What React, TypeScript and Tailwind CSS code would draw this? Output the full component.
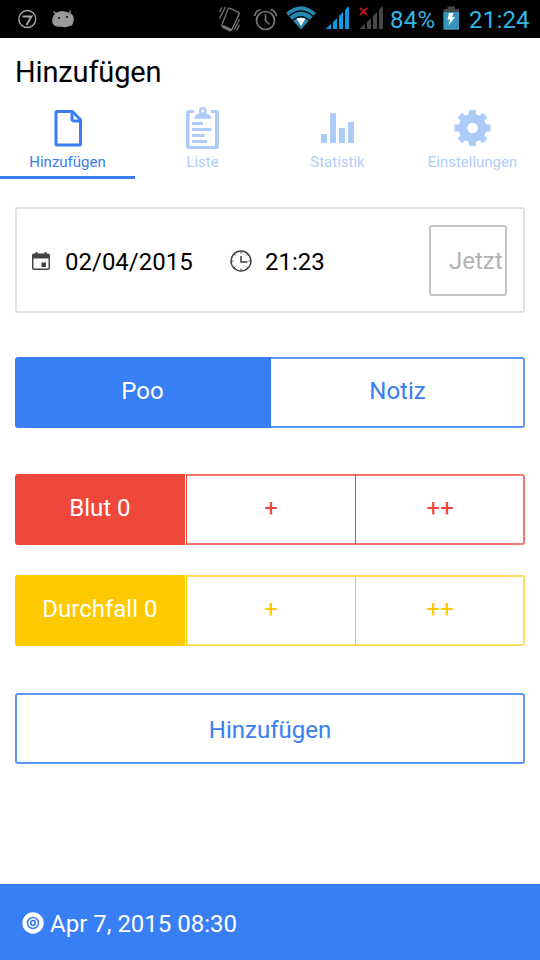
import React from 'react';
import clsx from 'clsx';

interface TabItem {
  id: string;
  label: string;
  icon: React.ReactNode;
}

const TABS: TabItem[] = [
  {
    id: 'add',
    label: 'Hinzufügen',
    icon: (
      <svg width="48" height="48" viewBox="0 0 48 48" fill="none" stroke="currentColor" strokeWidth="3">
        <path d="M13 7.500h15.500l8 8.200v24.300a1 1 0 0 1-1 1H13a1 1 0 0 1-1-1v-31.500a1 1 0 0 1 1-1z" strokeLinejoin="round" />
        <path d="M28 7.500v7.800a1.700 1.700 0 0 0 1.700 1.700h6.800" />
      </svg>
    ),
  },
  {
    id: 'list',
    label: 'Liste',
    icon: (
      <svg width="48" height="48" viewBox="1 0 48 48" fill="currentColor">
        <path d="M16 6h-4.500q-3.500 0-3.500 3v33q0 3 3 3h27q3 0 3-3v-33q0-3-3.500-3h-4.500v3h4v33h-25.500v-33h4.500z" />
        <path fillRule="evenodd" d="M16 14.700q1-4.400 5-5v-2.700a3.800 4 0 0 1 7.600 0v2.700q4 .6 5 5zM24.800 5.300a1.600 1.600 0 1 0 0 3.200a1.600 1.600 0 1 0 0-3.200z" />
        <path d="M14 18h11v3H14zM14 24h19.500v3H14zM14 30h12.500v3H14zM14 36h15v3H14z" />
      </svg>
    ),
  },
  {
    id: 'stats',
    label: 'Statistik',
    icon: (
      <svg width="48" height="48" viewBox="1 0 48 48" fill="currentColor">
        <path d="M8 30h6v9H8zM17 9h6v30h-6zM26 24h6v15h-6zM35 18h6v21h-6z" />
      </svg>
    ),
  },
  {
    id: 'settings',
    label: 'Einstellungen',
    icon: (
      <svg width="48" height="48" viewBox="0 0 48 48" fill="currentColor">
        <path
          fillRule="evenodd"
          d="M21 6h7v4.200l3.600 1.500 3-3 4.900 4.900-3 3 1.500 3.900h4.500v7h-4.500l-1.500 3.900 3 3-4.900 4.900-3-3-3.600 1.500V42h-7v-4.200l-3.600-1.500-3 3-4.900-4.900 3-3-1.500-3.900H6.500v-7H11l1.500-3.900-3-3 4.900-4.900 3 3 3.600-1.500zM24.500 18.700a5.300 5.300 0 1 0 0 10.600a5.300 5.300 0 1 0 0-10.600z"
        />
      </svg>
    ),
  },
];

const StatusBar = () => (
  <div className="flex h-[38px] items-center bg-black text-[#33b5e5]">
    <svg width="100" height="38" viewBox="0 0 100 38">
      <circle cx="27.300" cy="19" r="8.500" fill="none" stroke="#aaa" strokeWidth="1.300" />
      <path d="M22.500 16.500h9l-5 8.500" fill="none" stroke="#aaa" strokeWidth="1.800" />
      <path d="M57 13q5-2.500 11 0q5 1 5.200 6q0 7-5.200 7q-3 1.500-5.500 0q-8.500 1-9.700-4q-.5-6 4.200-9zM53.500 11.500l3.500 3M70.500 10.500l-1.500 4" fill="#9a9a9a" stroke="#9a9a9a" strokeWidth="1.200" />
      <circle cx="59" cy="18" r="1.100" fill="#111" />
      <circle cx="67" cy="17" r="1.100" fill="#111" />
    </svg>
    <svg className="ml-auto" width="180" height="38" viewBox="210 0 180 38">
      <g fill="none" stroke="#777" strokeWidth="1.300">
        <path d="M229.500 8.200l9.200 4.200q1 .5.600 1.500l-7.600 16q-.5 1-1.500.6l-7.800-3.800q-1-.5-.6-1.500l6.300-16.400q.4-1 1.400-.6z" />
        <path d="M222.800 26.300l8.200 4" strokeWidth="3" />
        <path d="M225.500 7l-6 11.500M222 7.500l-2.500 4.500M239.500 19.500l-5.500 10.500M239.500 25l-3 5.500" />
        <circle cx="265.500" cy="20.500" r="9" strokeWidth="1.700" />
        <path d="M265.500 14.500v6l4 4M254.500 16q1-5 6-6.500M276.500 16q-1-5-6-6.500" strokeWidth="1.700" />
      </g>
      <path d="M286 13q15-13.500 30 0l-15 16.500z" fill="#2789ae" />
      <path d="M288.500 16.500q12.500-11 25 0M292.500 20.500q8.500-7.500 17 0" fill="none" stroke="#001018" strokeWidth="1.400" />
      <path d="M296.500 18.500q4.500-1.500 9 0l-4.500 7.500z" fill="#fff" />
      <path d="M325.500 29l5.500-5v5zM333 22l4-3.800V29h-4zM339 16l4-4V29h-4zM345 10l4-4V29h-4z" fill="#0a9be5" />
      <path d="M359.500 29l5.500-5v5zM367 22l4-3.800V29h-4zM373 16l4-4V29h-4zM379 10l4-4V29h-4z" fill="#484848" />
      <path d="M360 8l7 7M367 8l-7 7" stroke="#b31212" strokeWidth="2" />
    </svg>
    <span className="w-[53px] pt-[2px] text-[24px] leading-[36px] tracking-[0.3px]">84%</span>
    <svg width="26" height="38" viewBox="443 0 26 38">
      <path d="M443.500 9h4V6.500h7.500V9h4v21h-15.500z" fill="#454545" />
      <path d="M443.500 12H459v17.500h-15.500z" fill="#3695bd" />
      <path d="M449 13h4.500l-1.500 4h3l-6.500 8.500 1.500-6h-2.500z" fill="#fff" />
    </svg>
    <span className="w-[71px] pt-[2px] text-[24px] leading-[36px] tracking-[0.2px]">21:24</span>
  </div>
);

interface SegmentProps {
  options: string[];
  tone: 'blue' | 'red' | 'yellow';
}

const TONES = {
  blue: { border: 'border-[#5c96f8]', fill: 'bg-[#387ef5]', text: 'text-[#387ef5]' },
  red: { border: 'border-[#f4766d]', fill: 'bg-[#ef473a]', text: 'text-[#ef473a]' },
  yellow: { border: 'border-[#fbdc5c]', fill: 'bg-[#ffc900]', text: 'text-[#ffc900]' },
};

const Segment: React.FC<SegmentProps> = ({ options, tone }) => {
  const t = TONES[tone];
  return (
    <div className="flex h-[71px] text-[24px]">
      {options.map((option, i) => {
        const last = i === options.length - 1;
        if (i === 0) {
          return (
            <button
              key={option}
              className={clsx('flex-1 rounded-l-[3px] pb-[3px] text-white', tone !== 'blue' && 'mr-px', t.fill)}
            >
              {option}
            </button>
          );
        }
        return (
          <div key={option} className="flex flex-1">
            <div className={clsx('w-px', t.fill)} />
            <button
              className={clsx('flex-1 border-y-2 pb-[3px]', last && 'rounded-r-[3px] border-r-2 pl-px', t.border, t.text)}
            >
              {option}
            </button>
          </div>
        );
      })}
    </div>
  );
};

export default function App() {
  const active = 'add';

  return (
    <div className="flex h-[960px] w-[540px] flex-col overflow-hidden bg-white font-[Roboto,sans-serif] text-black">
      <StatusBar />

      <h1 className="h-[66px] pl-[15px] pt-[14px] text-[29px] leading-[40px] tracking-[-0.15px]">Hinzufügen</h1>

      {/* Tabs */}
      <nav className="grid h-[75px] grid-cols-4 text-[#387ef5]">
        {TABS.map((tab) => (
          <div
            key={tab.id}
            className={clsx('flex flex-col items-center border-b-[3px]', tab.id === active ? 'border-[#387ef5]' : 'border-transparent')}
          >
            <div className={clsx('flex flex-col items-center', tab.id !== active && 'opacity-40')}>
              {tab.icon}
              <span className="text-[15px] leading-5">{tab.label}</span>
            </div>
          </div>
        ))}
      </nav>

      <main className="flex flex-col px-[15px] pt-[28px]">
        {/* Date and time */}
        <section className="flex h-[106px] items-center rounded-[3px] border-2 border-[#e2e2e2] pl-[14px] pr-4 text-[24px]">
          <svg className="mt-0.5" width="20" height="20" viewBox="0 0 20 20" fill="#444">
            <path fillRule="evenodd" d="M3 2.500h1.500V1h2v1.500h7V1h2v1.500H17q2 0 2 2V17q0 2-2 2H3q-2 0-2-2V4.500q0-2 2-2zM2.500 7.500v10h15v-10z" />
            <path d="M10.500 11.500h4.500v4.500h-4.500z" />
          </svg>
          <span className="ml-[14px] w-[165px] pt-[3px]">02/04/2015</span>
          <svg className="mt-px" width="22" height="22" viewBox="0 0 22 22" fill="none" stroke="#444" strokeWidth="1.500">
            <circle cx="11" cy="11" r="10" />
            <path d="M11 6v6h6.500" />
            <path d="M11 1v2.500M11 18.500V21M1 11h2.500M18.500 11H21M4 4l1.500 1.500M18 4l-1.500 1.500M4 18l1.500-1.500M18 18l-1.500-1.500" strokeWidth="1" />
          </svg>
          <span className="ml-[13px] pt-[3px]">21:23</span>
          <button className="ml-auto h-[71px] w-[78px] rounded-[3px] border-2 border-[#c4c4c4] pl-[18px] pt-[2px] text-left text-[#b2b2b2]">
            Jetzt
          </button>
        </section>

        <div className="mt-[44px]">
          <Segment options={['Poo', 'Notiz']} tone="blue" />
        </div>
        <div className="mt-[46px] flex flex-col gap-[30px]">
          <Segment options={['Blut 0', '+', '++']} tone="red" />
          <Segment options={['Durchfall 0', '+', '++']} tone="yellow" />
        </div>

        <button className="mt-[47px] h-[71px] rounded-[3px] border-2 border-[#5c96f8] pt-[2px] text-[24px] text-[#387ef5]">
          Hinzufügen
        </button>
      </main>

      <footer className="mt-auto flex h-[76px] items-center bg-[#387ef5] pl-[22px] pt-[2px] text-[24px] text-white">
        <svg width="22" height="22" viewBox="0 0 22 22">
          <circle cx="11" cy="11" r="10.700" fill="#fff" />
          <circle cx="11" cy="11" r="5.500" fill="none" stroke="#387ef5" strokeWidth="1.500" />
          <circle cx="11" cy="11" r="2.300" fill="none" stroke="#387ef5" strokeWidth="1.700" />
        </svg>
        <span className="ml-[6px] pt-px">Apr 7, 2015 08:30</span>
      </footer>
    </div>
  );
}
